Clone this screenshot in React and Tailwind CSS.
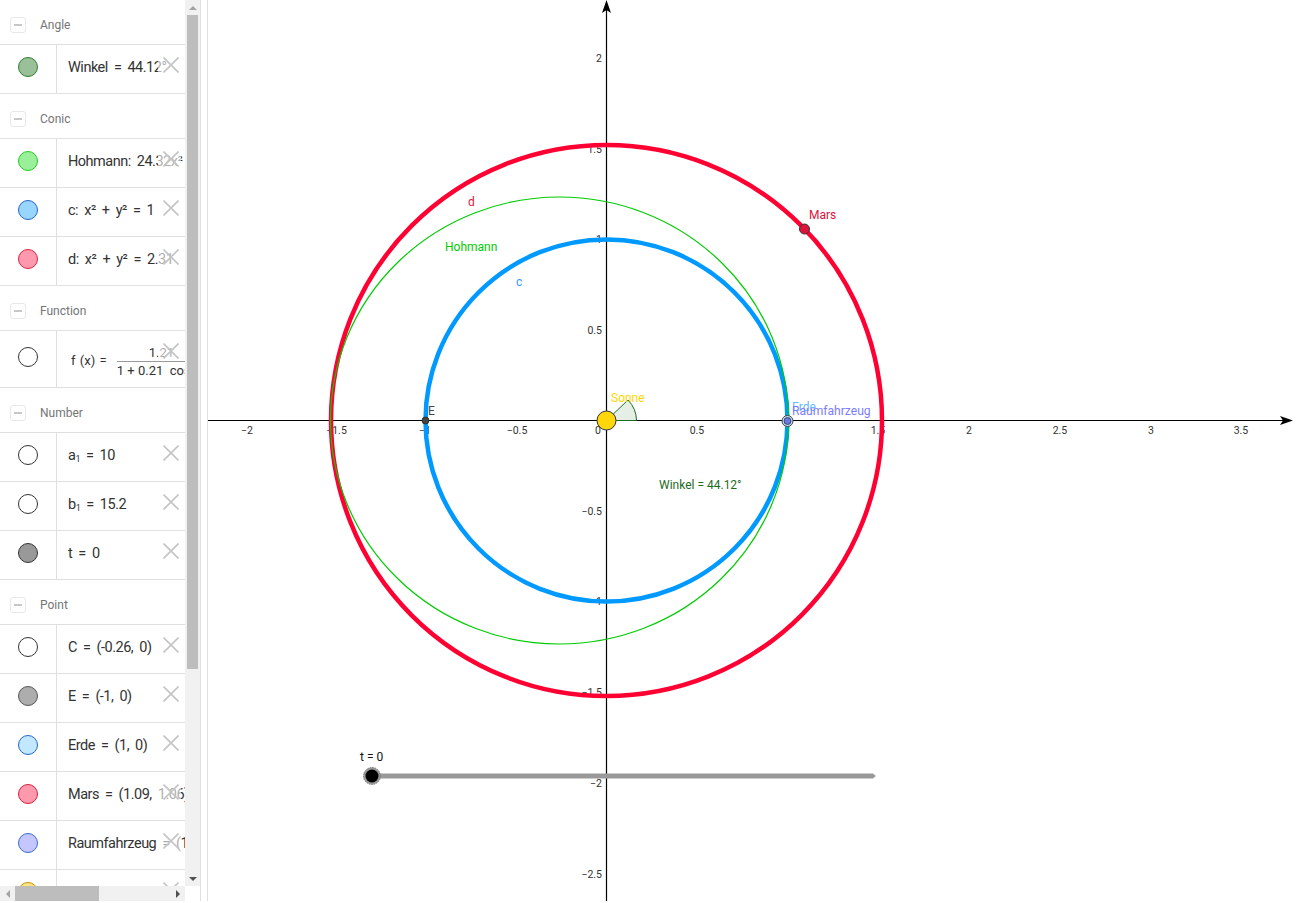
const GROUPS = [
  {
    name: 'Angle',
    rows: [{ text: 'Winkel = 44.12°', fill: 'bg-[#99c099]', border: 'border-[#2e7d2e]' }],
  },
  {
    name: 'Conic',
    rows: [
      { text: 'Hohmann: 24.32x² + 25.4y² + 12.6x = 35', fill: 'bg-[#99f099]', border: 'border-[#22cc22]' },
      { text: 'c: x² + y² = 1', fill: 'bg-[#99d6ff]', border: 'border-[#2266cc]' },
      { text: 'd: x² + y² = 2.31', fill: 'bg-[#ff99ad]', border: 'border-[#e0203f]' },
    ],
  },
  {
    name: 'Function',
    rows: [{ fraction: true, fill: 'bg-white', border: 'border-[#333333]' }],
  },
  {
    name: 'Number',
    rows: [
      { text: 'a', sub: '1', rest: ' = 10', fill: 'bg-white', border: 'border-[#333333]' },
      { text: 'b', sub: '1', rest: ' = 15.2', fill: 'bg-white', border: 'border-[#333333]' },
      { text: 't = 0', fill: 'bg-[#999999]', border: 'border-[#333333]' },
    ],
  },
  {
    name: 'Point',
    rows: [
      { text: 'C = (-0.26, 0)', fill: 'bg-white', border: 'border-[#333333]' },
      { text: 'E = (-1, 0)', fill: 'bg-[#adadad]', border: 'border-[#555555]' },
      { text: 'Erde = (1, 0)', fill: 'bg-[#c2e8ff]', border: 'border-[#2266cc]' },
      { text: 'Mars = (1.09, 1.06)', fill: 'bg-[#ff99ad]', border: 'border-[#d81e3c]' },
      { text: 'Raumfahrzeug = (1, 0)', fill: 'bg-[#c6c6ff]', border: 'border-[#3a6ad0]' },
      { text: '', fill: 'bg-[#ffe680]', border: 'border-[#c09000]' },
    ],
  },
]

const X_LABELS = [
  ['−2', 247], ['−1.5', 336.5], ['−1', 425], ['−0.5', 517], ['0', 598], ['0.5', 697], ['1.5', 878],
  ['2', 969], ['2.5', 1060], ['3', 1151], ['3.5', 1241],
]
const Y_LABELS = [
  ['2', 58], ['1.5', 149], ['1', 239], ['0.5', 330], ['−0.5', 511],
  ['−1', 601], ['−1.5', 692], ['−2', 783], ['−2.5', 874],
]

const Row = ({ row }) => (
  <div className={`relative flex border-b border-[#e0e0e0] shrink-0 ${row.fraction ? 'h-[57px]' : 'h-[49px]'}`}>
    <div className="w-[57px] shrink-0 flex items-center justify-center border-r border-[#e0e0e0] pb-1">
      <span className={`block w-5 h-5 rounded-full border ${row.fill} ${row.border}`} />
    </div>
    <div className="flex-1 min-w-0 overflow-hidden flex items-center pl-[11px] pb-[2px] text-[14.5px] tracking-[-0.5px] text-[#333333] whitespace-pre [word-spacing:3px]">
      {row.fraction ? (
        <div className="flex items-center mt-[6px] text-[13px] tracking-normal text-[#333333] pl-[3px] [word-spacing:0px]">
          <span className="[word-spacing:1px]">f (x) = </span>
          <span className="flex flex-col items-center ml-[6px]">
            <span className="leading-[17px] border-b border-[#999999] w-full text-center">1.21</span>
            <span className="leading-[17px]">1 + 0.21  cos(x)</span>
          </span>
        </div>
      ) : (
        <span>
          {row.text}
          {row.sub && <sub className="text-[9px]">{row.sub}</sub>}
          {row.rest}
        </span>
      )}
    </div>
    <div className="absolute left-[158px] top-0 w-[23px] h-[30px] bg-white/60" />
    <svg className="absolute left-[163px] top-[12px]" width="16" height="16" viewBox="0 0 16 16">
      <path d="M0.5 0.5L15.5 15.5M15.5 0.5L0.5 15.5" stroke="#c4c4c4" strokeWidth="1.6" fill="none" />
    </svg>
  </div>
)

const Group = ({ group }) => (
  <div className="shrink-0">
    <div className="h-[45px] flex items-center border-b border-[#e0e0e0] pl-[10px] pt-[5px] text-[12px] text-[#757575]">
      <span className="w-[16px] h-[16px] border border-[#e8e8e8] rounded-[3px] flex items-center justify-center">
        <span className="block w-2 h-[2px] bg-[#c8c8c8]" />
      </span>
      <span className="ml-[14px]">{group.name}</span>
    </div>
    {group.rows.map((row, i) => (
      <Row key={i} row={row} />
    ))}
  </div>
)

const Graph = () => (
  <svg className="block" width="1088" height="901" viewBox="208 0 1088 901" fontFamily="Roboto, sans-serif">
    {/* axes */}
    <line x1="208" y1="420.5" x2="1284" y2="420.5" stroke="#000" strokeWidth="1.2" />
    <line x1="606.5" y1="10" x2="606.5" y2="901" stroke="#000" strokeWidth="1.2" />
    <path d="M1293 420.5L1280 416L1283 420.5L1280 425Z" fill="#000" />
    <path d="M606.5 0L602 13L606.5 10L611 13Z" fill="#000" />
    {X_LABELS.map(([t, x]) => (
      <text key={t} x={x} y="434" textAnchor="middle" fontSize="10.5" fill="#333">{t}</text>
    ))}
    {Y_LABELS.map(([t, y]) => (
      <text key={t} x="602" y={y + 4} textAnchor="end" fontSize="10.5" fill="#333">{t}</text>
    ))}

    {/* orbits */}
    <circle cx="606.5" cy="420.5" r="275.5" fill="none" stroke="#ff0033" strokeWidth="4.5" />
    <circle cx="606.5" cy="420.5" r="181" fill="none" stroke="#0099ff" strokeWidth="4.5" />
    <ellipse cx="559.5" cy="420.5" rx="229" ry="223.5" fill="none" stroke="#00cc00" strokeWidth="1.2" />

    {/* angle */}
    <path d="M606.5 420.5L628 400A30 30 0 0 1 636.5 420.5Z" fill="#006400" fillOpacity="0.1" stroke="#1d6b1d" strokeWidth="1" />

    {/* points */}
    <circle cx="606.5" cy="420.5" r="9.5" fill="#ffd60a" stroke="#333" strokeWidth="1" />
    <circle cx="425.5" cy="420.5" r="3.5" fill="#444" stroke="#222" strokeWidth="0.8" />
    <circle cx="787.5" cy="421" r="5.5" fill="#b8e0ff" stroke="#444" strokeWidth="1" />
    <circle cx="787.5" cy="421" r="3.5" fill="#6a78e8" stroke="#333" strokeWidth="0.8" />
    <circle cx="804.5" cy="229" r="5" fill="#dc143c" stroke="#333" strokeWidth="1" />

    {/* labels */}
    <text x="611" y="402" fontSize="12" fill="#ffd700">Sonne</text>
    <text x="792" y="411" fontSize="12" fill="#66b8ff">Erde</text>
    <text x="792" y="415" fontSize="12.1" fill="#7d7dff">Raumfahrzeug</text>
    <text x="428" y="415" fontSize="12" fill="#444">E</text>
    <text x="809" y="219" fontSize="12" fill="#dc143c">Mars</text>
    <text x="659" y="489" fontSize="12" fill="#1d6b1d">Winkel = 44.12°</text>
    <text x="468" y="206" fontSize="12" fill="#dc143c">d</text>
    <text x="516" y="286" fontSize="12" fill="#3399ff">c</text>
    <text x="445" y="251" fontSize="12" fill="#00cc00">Hohmann</text>

    {/* slider */}
    <text x="360" y="761" fontSize="12" fill="#111">t = 0</text>
    <line x1="372" y1="776" x2="872" y2="776" stroke="#999" strokeWidth="5" />
    <path d="M872 773L876 776L872 779Z" fill="#999" />
    <circle cx="372" cy="776" r="8.5" fill="#999" stroke="#777" strokeWidth="1" strokeDasharray="1.5 1" />
    <circle cx="372" cy="776" r="6.5" fill="#000" />
  </svg>
)

export default function App() {
  return (
    <div className="w-[1296px] h-[903px] flex items-start overflow-hidden bg-white font-['Roboto',sans-serif]">
      <div className="w-[185px] h-[901px] shrink-0 flex flex-col">
        <div className="flex-1 min-h-0 overflow-hidden flex flex-col">
          {GROUPS.map((group) => (
            <Group key={group.name} group={group} />
          ))}
        </div>
        <div className="h-[15px] shrink-0 bg-[#f1f1f1] flex items-center">
          <div className="w-[15px] flex justify-center">
            <span className="block w-0 h-0 border-y-[4px] border-y-transparent border-r-[4px] border-r-[#a3a3a3]" />
          </div>
          <div className="w-[84px] h-full bg-[#bdbdbd]" />
          <div className="flex-1" />
          <div className="w-[15px] flex justify-center">
            <span className="block w-0 h-0 border-y-[4px] border-y-transparent border-l-[4px] border-l-[#505050]" />
          </div>
        </div>
      </div>

      <div className="w-[15px] h-[886px] shrink-0 bg-[#f1f1f1] flex flex-col items-center">
        <div className="h-[15px] flex items-center justify-center">
          <span className="block w-0 h-0 border-x-[4px] border-x-transparent border-b-[4px] border-b-[#a3a3a3]" />
        </div>
        <div className="w-[11px] h-[654px] bg-[#bdbdbd]" />
        <div className="flex-1" />
        <div className="h-[15px] flex items-center justify-center">
          <span className="block w-0 h-0 border-x-[4px] border-x-transparent border-t-[4px] border-t-[#505050]" />
        </div>
      </div>

      <div className="w-[8px] h-[901px] shrink-0 border-x border-[#e0e0e0] bg-white" />
      <Graph />
    </div>
  )
}
